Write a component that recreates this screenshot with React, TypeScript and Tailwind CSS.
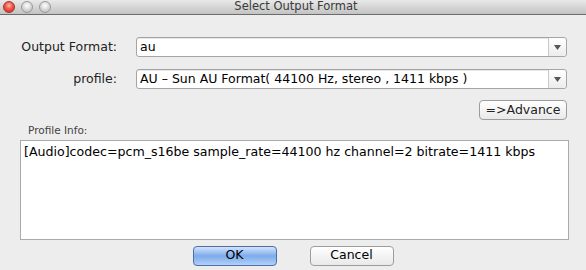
import React from "react";

const font = { fontFamily: '"DejaVu Sans", "Lucida Grande", sans-serif' };

const Light = ({ color }: { color: "red" | "grey" }) => (
  <span
    className={
      color === "red"
        ? "block h-[12px] w-[12px] rounded-full border border-[#a8332c] bg-[radial-gradient(circle_at_50%_35%,#ffb3a8_0%,#f0564a_45%,#c9241b_100%)]"
        : "block h-[12px] w-[12px] rounded-full border border-[#9a9a9a] bg-[radial-gradient(circle_at_50%_35%,#ffffff_0%,#dcdcdc_45%,#b4b4b4_100%)]"
    }
  />
);

const Combo = ({ value }: { value: string }) => (
  <div className="flex h-[20px] w-[431px] items-stretch rounded-[3px] border border-[#a5a5a5] bg-white shadow-[inset_0_1px_0_#e6e6e6]">
    <div className="flex flex-1 items-center pl-[3px] text-[12.5px] leading-none text-black">{value}</div>
    <div className="flex w-[18px] items-center justify-center rounded-r-[3px] border-l border-[#c8c8c8] bg-gradient-to-b from-white to-[#ececec]">
      <svg width="7" height="5" viewBox="0 0 7 5">
        <path d="M0 0 L7 0 L3.5 5 Z" fill="#555" />
      </svg>
    </div>
  </div>
);

export default function App() {
  return (
    <div className="flex h-[270px] w-[586px] flex-col overflow-hidden bg-[#ededed]" style={font}>
      <div className="relative flex h-[15px] items-center border-b border-[#6b6b6b] bg-gradient-to-b from-[#e9e9e9] to-[#c3c3c3]">
        <div className="flex gap-[6px] pl-[3px]">
          <Light color="red" />
          <Light color="grey" />
          <Light color="grey" />
        </div>
        <div className="absolute inset-0 flex items-center justify-center pl-[6px] text-[11.5px] leading-none text-[#3a3a3a]">
          Select Output Format
        </div>
      </div>

      <div className="mt-[22px] flex items-center">
        <div className="w-[117px] text-right text-[12.5px] leading-none text-[#222]">Output Format:</div>
        <div className="ml-[19px]">
          <Combo value="au" />
        </div>
      </div>

      <div className="mt-[12px] flex items-center">
        <div className="w-[117px] text-right text-[12.5px] leading-none text-[#222]">profile:</div>
        <div className="ml-[19px]">
          <Combo value="AU – Sun AU Format( 44100 Hz, stereo , 1411 kbps )" />
        </div>
      </div>

      <div className="mt-[11px] flex justify-end pr-[19px]">
        <button className="flex h-[20px] w-[88px] items-center justify-center rounded-[4px] border border-[#9d9d9d] bg-gradient-to-b from-white to-[#e9e9e9] text-[12.5px] leading-none text-[#222]">
          =&gt;Advance
        </button>
      </div>

      <div className="mt-[5px] pl-[28px] text-[10.5px] leading-none text-[#444]">Profile Info:</div>

      <div className="ml-[20px] mt-[4px] h-[100px] w-[549px] border border-[#aaaaaa] bg-white px-[3px] pt-[3px] text-[12.6px] leading-[15px] text-black">
        [Audio]codec=pcm_s16be sample_rate=44100 hz channel=2 bitrate=1411 kbps
      </div>

      <div className="mt-[6px] flex justify-center gap-[33px]">
        <button className="flex h-[20px] w-[84px] items-center justify-center rounded-[4px] border border-[#4e6fa8] bg-gradient-to-b from-[#d3e4fb] via-[#7eabec] to-[#b0d0f7] text-[12.5px] leading-none text-black">
          OK
        </button>
        <button className="flex h-[20px] w-[84px] items-center justify-center rounded-[4px] border border-[#9d9d9d] bg-gradient-to-b from-white to-[#e9e9e9] text-[12.5px] leading-none text-black">
          Cancel
        </button>
      </div>
    </div>
  );
}
